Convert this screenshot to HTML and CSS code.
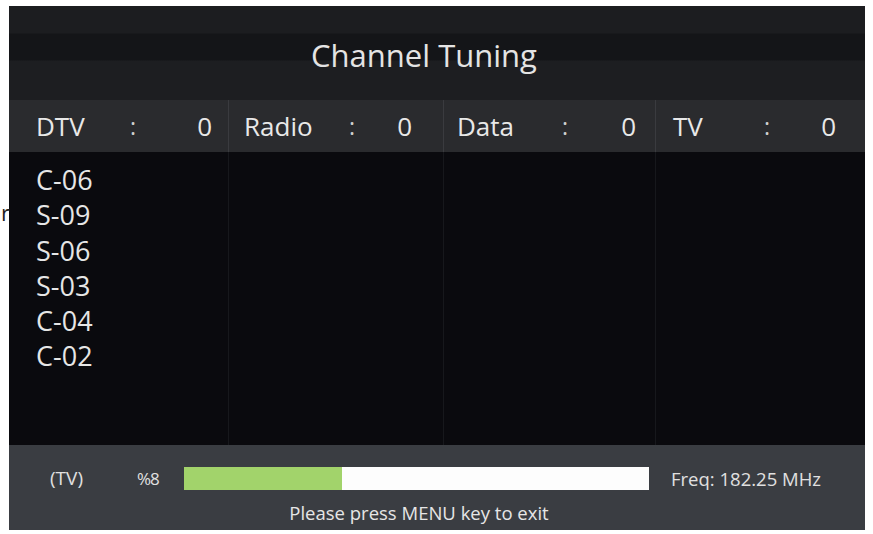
FILE: index.html
```html
<!DOCTYPE html>
<html lang="en">
<head>
  <meta charset="UTF-8" />
  <meta name="viewport" content="width=device-width, initial-scale=1.0" />
  <title>Channel Tuning</title>
  <link rel="stylesheet" href="styles.css">
</head>
<body>
  <span class="edge-char">r</span>
  <div id="screen">
    <div id="title">Channel Tuning</div>

    <div id="counts">
      <div class="count dtv"><span class="label">DTV</span><span class="sep">:</span><span class="num">0</span></div>
      <div class="count radio"><span class="label">Radio</span><span class="sep">:</span><span class="num">0</span></div>
      <div class="count data"><span class="label">Data</span><span class="sep">:</span><span class="num">0</span></div>
      <div class="count tv"><span class="label">TV</span><span class="sep">:</span><span class="num">0</span></div>
    </div>

    <div id="lists">
      <ul class="col dtv">
        <li>C-06</li>
        <li>S-09</li>
        <li>S-06</li>
        <li>S-03</li>
        <li>C-04</li>
        <li>C-02</li>
      </ul>
      <ul class="col radio"></ul>
      <ul class="col data"></ul>
      <ul class="col tv"></ul>
    </div>

    <div id="status">
      <div class="status-row">
        <span id="mode">(TV)</span>
        <span id="percent">%8</span>
        <div id="bar"><div id="barFill" style="width: 34%"></div></div>
        <span id="freq">Freq: 182.25 MHz</span>
      </div>
      <div id="hint">Please press MENU key to exit</div>
    </div>
  </div>
</body>
</html>
```

FILE: styles.css
```css
body {
  margin: 0;
  background: #fff;
  font-family: 'Open Sans', 'Noto Sans', sans-serif;
  overflow: hidden;
  position: relative;
}

.edge-char {
  position: absolute;
  left: 1px;
  top: 197px;
  font-size: 22px;
  color: #222;
}

#screen {
  width: 856px;
  height: 524px;
  margin: 6px 0 0 9px;
  display: flex;
  flex-direction: column;
  background: #0a0a0e;
  color: #e8e8e8;
}

#title {
  height: 94px;
  display: flex;
  align-items: center;
  justify-content: center;
  padding: 4px 26px 0 0;
  box-sizing: border-box;
  font-size: 31px;
  color: #e4e4e4;
  background: linear-gradient(#1c1d20 0, #1c1d20 27px, #141518 28px, #141518 54px, #1d1e21 55px, #1d1e21 100%);
}

/* channel counters */
#counts {
  height: 52px;
  display: flex;
  background: #2a2b2e;
}

.count {
  display: grid;
  align-items: center;
  box-sizing: border-box;
  font-size: 26px;
  border-left: 1px solid #3a3b3f;
}

.count .sep {
  font-size: 23px;
  color: #cfcfcf;
}

.dtv { width: 219px; }
.radio { width: 215px; }
.data { width: 212px; }
.tv { width: 210px; }

.count.dtv {
  border-left: none;
  padding: 0 16px 0 27px;
  grid-template-columns: 94px 1fr auto;
}

.count.radio {
  padding: 0 31px 0 15px;
  grid-template-columns: 105px 1fr auto;
}

.count.data {
  padding: 0 19px 0 13px;
  grid-template-columns: 105px 1fr auto;
}

.count.tv {
  padding: 0 29px 0 17px;
  grid-template-columns: 91px 1fr auto;
}

/* found channels */
#lists {
  height: 293px;
  display: flex;
}

.col {
  list-style: none;
  margin: 0;
  padding: 10px 0 0 15px;
  box-sizing: border-box;
  border-left: 1px solid #17181c;
}

.col.dtv {
  padding-left: 27px;
  border-left: none;
}

.col li {
  height: 35.3px;
  line-height: 35px;
  font-size: 27px;
  color: #e6e6e6;
}

/* progress + hint */
#status {
  flex: 1;
  background: #3a3d42;
  display: flex;
  flex-direction: column;
  padding-top: 21px;
  box-sizing: border-box;
}

.status-row {
  display: flex;
  align-items: center;
  height: 24px;
  font-size: 17px;
  color: #e0e0e0;
}

#mode {
  width: 87px;
  padding-left: 41px;
  font-size: 19px;
}

#percent {
  width: 47px;
  font-size: 17px;
  letter-spacing: -1px;
}

#bar {
  width: 465px;
  height: 23px;
  background: #fdfdfd;
}

#barFill {
  height: 100%;
  background: #a2d36b;
}

#freq {
  padding-left: 22px;
  font-size: 18.5px;
}

#hint {
  margin-top: 10px;
  text-align: center;
  padding-right: 36px;
  font-size: 18.5px;
  color: #e6e6e6;
}
```
